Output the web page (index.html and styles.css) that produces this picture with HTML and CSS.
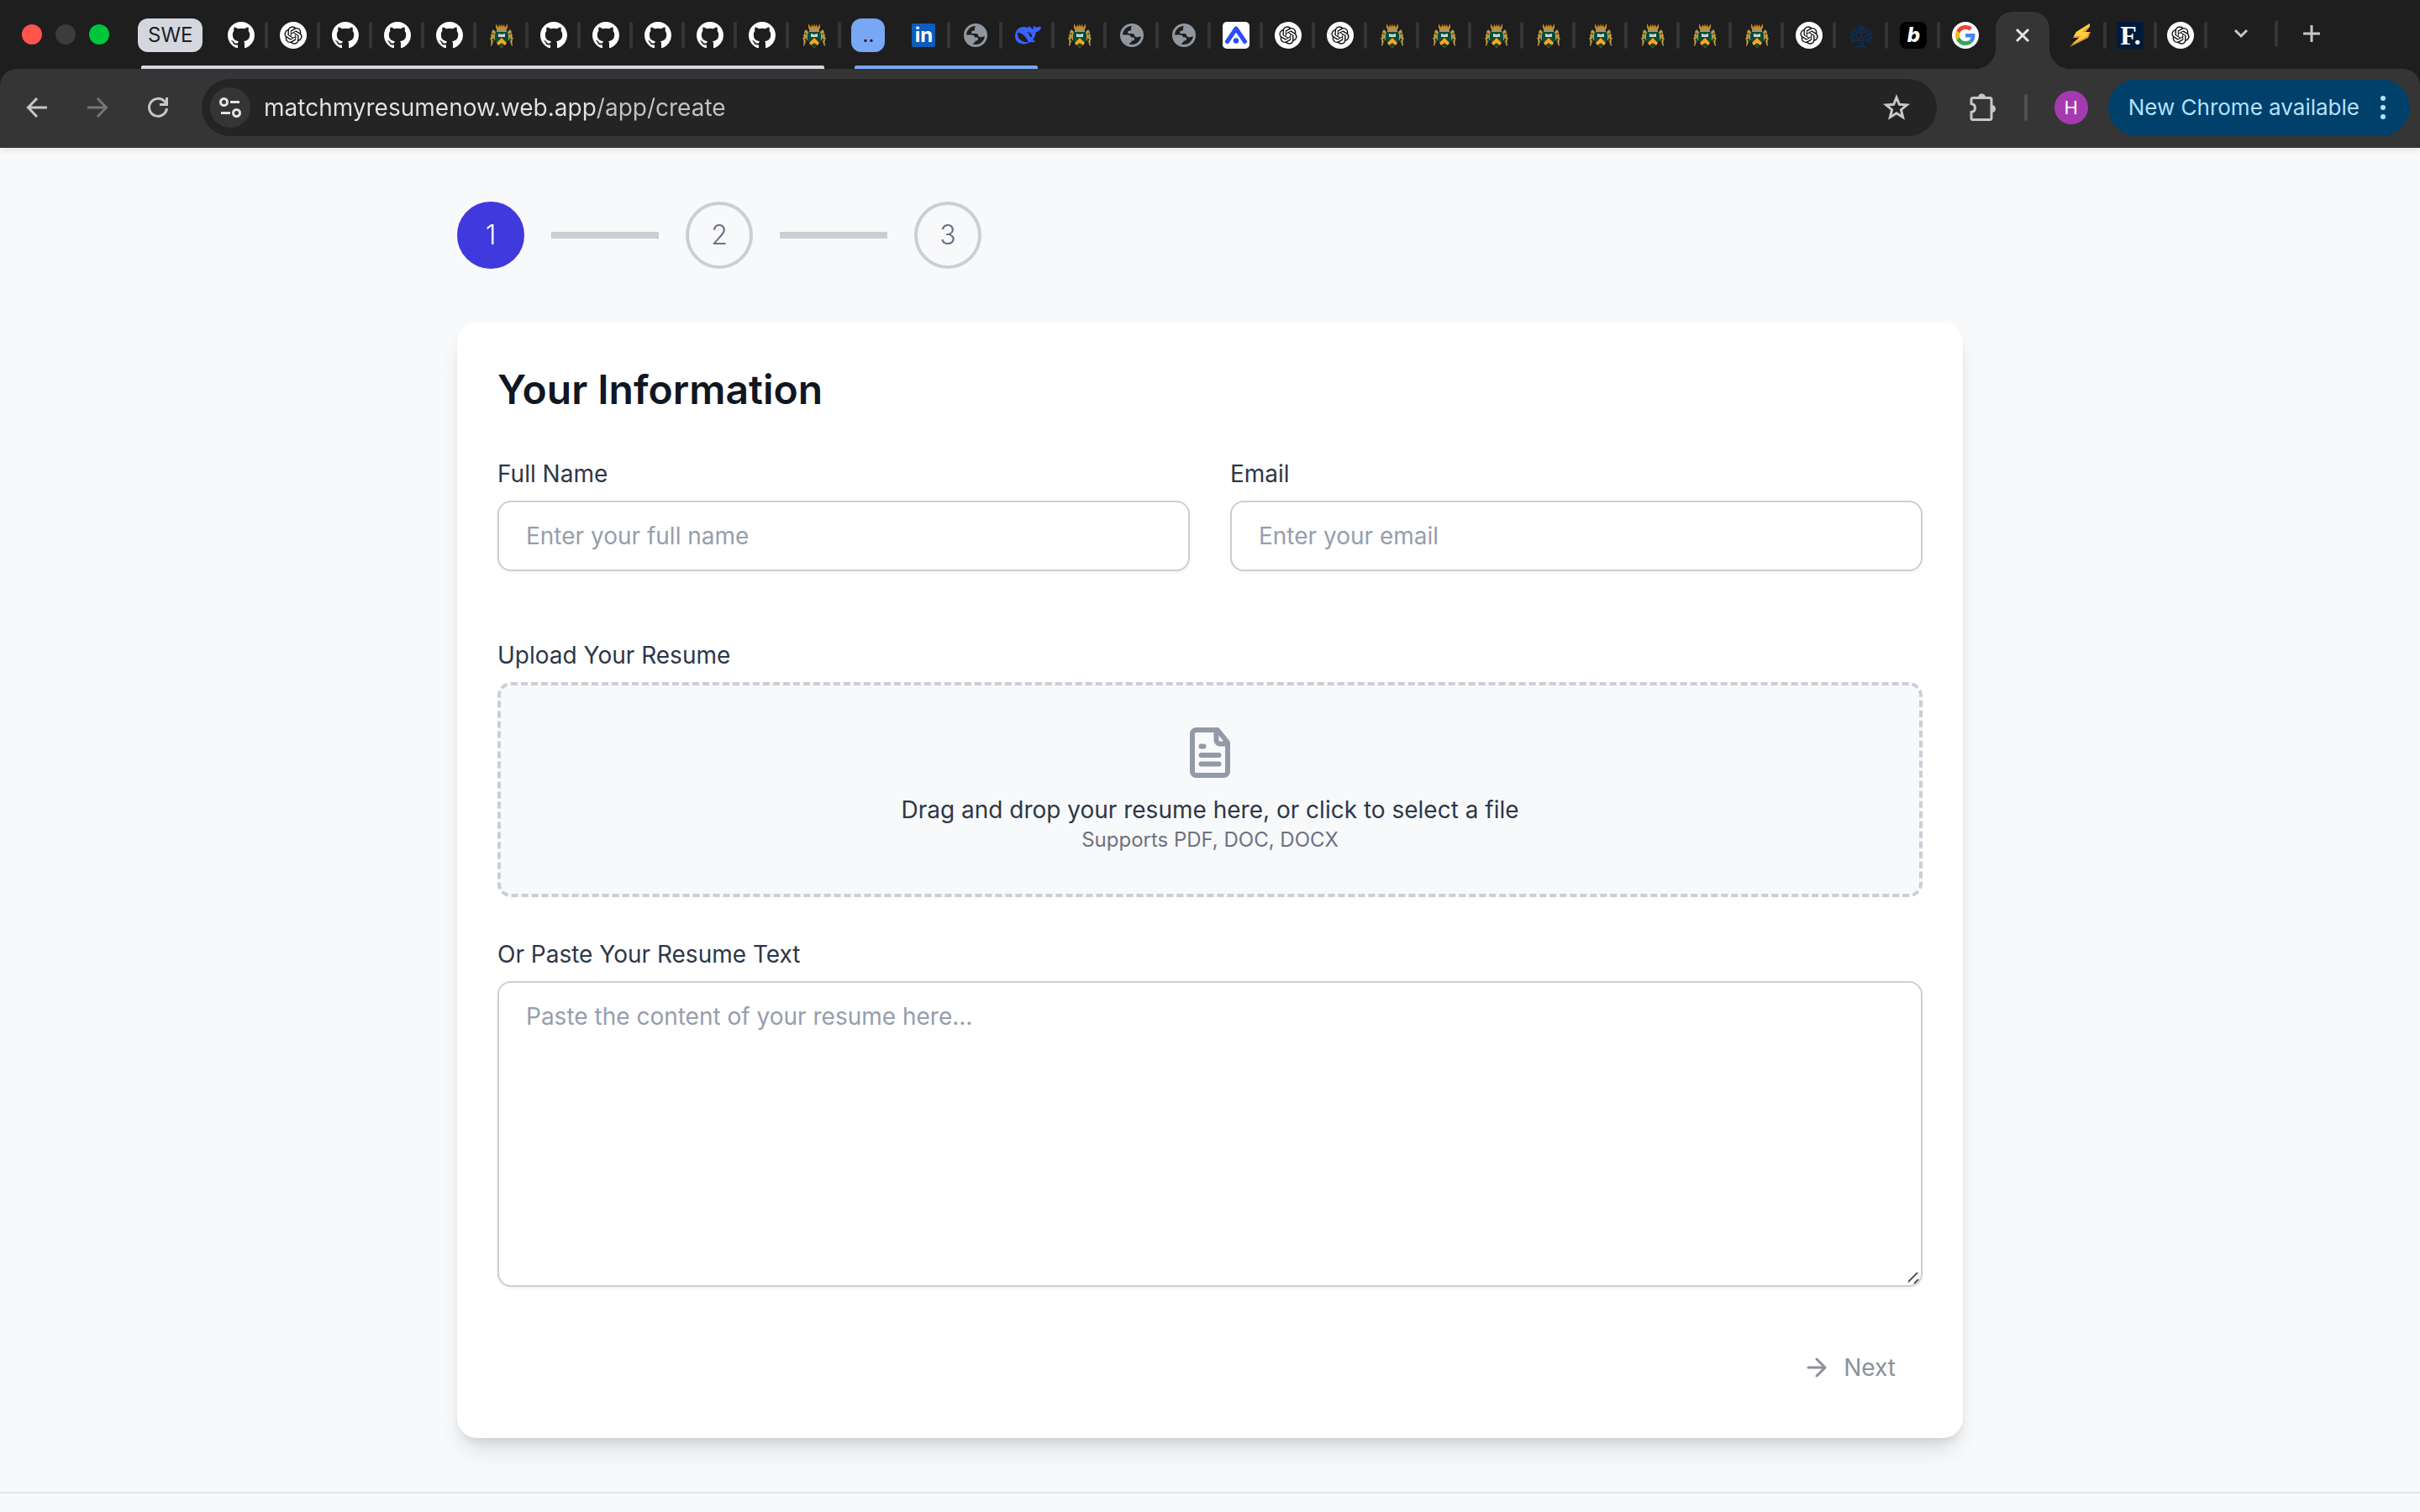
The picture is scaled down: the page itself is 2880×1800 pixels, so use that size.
FILE: index.html
```
<!DOCTYPE html>
<html lang="en">
<head>
  <meta charset="UTF-8">
  <meta name="viewport" content="width=device-width, initial-scale=1.0">
  <title>Match My Resume Now</title>
  <link rel="stylesheet" href="styles.css">
</head>
<body>
  <!-- Icon sprite -->
  <svg class="sprite" aria-hidden="true">
    <symbol id="github" viewBox="0 0 16 16">
      <path fill="#fff" d="M8 0C3.58 0 0 3.58 0 8c0 3.54 2.29 6.53 5.47 7.59.4.07.55-.17.55-.38 0-.19-.01-.82-.01-1.49-2.01.37-2.53-.49-2.69-.94-.09-.23-.48-.94-.82-1.13-.28-.15-.68-.52-.01-.53.63-.01 1.08.58 1.23.82.72 1.21 1.87.87 2.33.66.07-.52.28-.87.51-1.07-1.78-.2-3.64-.89-3.64-3.95 0-.87.31-1.59.82-2.15-.08-.2-.36-1.02.08-2.12 0 0 .67-.21 2.2.82.64-.18 1.32-.27 2-.27s1.36.09 2 .27c1.53-1.04 2.2-.82 2.2-.82.44 1.1.16 1.92.08 2.12.51.56.82 1.27.82 2.15 0 3.07-1.87 3.75-3.65 3.95.29.25.54.73.54 1.48 0 1.07-.01 1.93-.01 2.2 0 .21.15.46.55.38A8.01 8.01 0 0 0 16 8c0-4.42-3.58-8-8-8z"/>
    </symbol>
    <symbol id="openai" viewBox="0 0 36 36">
      <circle cx="18" cy="18" r="18" fill="#fff"/>
      <path transform="translate(6 6)" fill="#111" d="M22.2819 9.8211a5.9847 5.9847 0 0 0-.5157-4.9108 6.0462 6.0462 0 0 0-6.5098-2.9A6.0651 6.0651 0 0 0 4.9807 4.1818a5.9847 5.9847 0 0 0-3.9977 2.9 6.0462 6.0462 0 0 0 .7427 7.0966 5.98 5.98 0 0 0 .511 4.9107 6.051 6.051 0 0 0 6.5146 2.9001A5.9847 5.9847 0 0 0 13.2599 24a6.0557 6.0557 0 0 0 5.7718-4.2058 5.9894 5.9894 0 0 0 3.9977-2.9001 6.0557 6.0557 0 0 0-.7475-7.0729zm-9.022 12.6081a4.4755 4.4755 0 0 1-2.8764-1.0408l.1419-.0804 4.7783-2.7582a.7948.7948 0 0 0 .3927-.6813v-6.7369l2.02 1.1686a.071.071 0 0 1 .038.052v5.5826a4.504 4.504 0 0 1-4.4945 4.4944zm-9.6607-4.1254a4.4708 4.4708 0 0 1-.5346-3.0137l.142.0852 4.783 2.7582a.7712.7712 0 0 0 .7806 0l5.8428-3.3685v2.3324a.0804.0804 0 0 1-.0332.0615L9.74 19.9502a4.4992 4.4992 0 0 1-6.1408-1.6464zM2.3408 7.8956a4.485 4.485 0 0 1 2.3655-1.9728V11.6a.7664.7664 0 0 0 .3879.6765l5.8144 3.3543-2.0201 1.1685a.0757.0757 0 0 1-.071 0l-4.8303-2.7865A4.504 4.504 0 0 1 2.3408 7.872zm16.5963 3.8558L13.1038 8.364 15.1192 7.2a.0757.0757 0 0 1 .071 0l4.8303 2.7913a4.4944 4.4944 0 0 1-.6765 8.1042v-5.6772a.79.79 0 0 0-.407-.667zm2.0107-3.0231l-.142-.0852-4.7735-2.7818a.7759.7759 0 0 0-.7854 0L9.409 9.2297V6.8974a.0662.0662 0 0 1 .0284-.0615l4.8303-2.7866a4.4992 4.4992 0 0 1 6.6802 4.66zM8.3065 12.863l-2.02-1.1638a.0804.0804 0 0 1-.038-.0567V6.0742a4.4992 4.4992 0 0 1 7.3757-3.4537l-.142.0805L8.704 5.459a.7948.7948 0 0 0-.3927.6813zm1.0976-2.3654l2.602-1.4998 2.6069 1.4998v2.9994l-2.5974 1.4997-2.6067-1.4997Z"/>
    </symbol>
    <symbol id="crest" viewBox="0 0 32 32">
      <path fill="#c98a26" d="M9 2l3 5 1-4 2 3 1-4 1 4 2-3 1 4 3-5v5l-2 4H11L9 7z"/>
      <path fill="#8f9a8b" d="M10 10h12v2H10z"/>
      <path fill="#c0994a" d="M6 9l4 4-1 8-3 2-2 6-1-1 1-6-2-2 3-4-1-4z"/>
      <path fill="#c0994a" d="M26 9l-4 4 1 8 3 2 2 6 1-1-1-6 2-2-3-4 1-4z"/>
      <path fill="#0d4a37" d="M9 12h14l1 3v7l-8 8-8-8v-7zM5 13l2 1-2 4zM27 13l-2 1 2 4zM4 21l3-2v6zM28 21l-3-2v6z"/>
      <path fill="#dfa52f" d="M4 14l2 1-1 3-2-1zM28 14l-2 1 1 3 2-1zM3 22l2-1v5zM29 22l-2-1v5z"/>
      <path fill="#c9d6d8" d="M12 14l4 1 4-1v4h-8z"/>
      <path fill="#ffa41c" d="M16 19l6 6-2 3-4-3-4 3-2-3z"/>
      <path fill="#6d7f3a" d="M12 28l4 3 4-3-4 2z"/>
    </symbol>
    <symbol id="globe" viewBox="0 0 32 32">
      <circle cx="16" cy="16" r="12.5" fill="none" stroke="#91979e" stroke-width="3"/>
      <path fill="#91979e" d="M19 3c-1 1-4 2-4 5 0 1 .500 2-1 2.500-2 .500-3 0-3 2 0 1.500 1 1.500 3 1.500h3c2 0 2 3 3.500 4 2.500 1 5-1 8-1 .500-7-3-12-9.500-14z"/>
      <path fill="#91979e" d="M3 15.500h8c3 0 4 1.500 4 3h2.500c1 0 1.500.500 1.500 1.500 0 2-1 2.500-3 2.500l-1 2c-1 .500-2 .500-2 2V29C7 27 3 22 3 15.500z"/>
    </symbol>
    <symbol id="whale" viewBox="0 0 32 32">
      <path fill="#3a62ff" d="M1 17C1 10 6 5.500 12 6c2 0 3 1 4 1l2-2c1 2 3 2 4 4 1-1 1-2 .500-4 2 0 3 1 4 2 2-1 3-1.500 5.500-1-.500 4-3 5.500-6 6-.500 4-2 7-4 9 1 1 2 1 3 2.500-2 1-4.500 1-6 .500C13 28.500 1 27 1 17z"/>
      <path fill="#1e1e1e" d="M4 13c5-1 10 5 13 11-6 1-14-3-13-11z"/>
      <path fill="#1e1e1e" d="M15 12c4 0 7 3 6 6-2 1-3-3-6-6z"/>
      <circle cx="17" cy="14" r="1" fill="#3a62ff"/>
    </symbol>
    <symbol id="arch" viewBox="0 0 32 32">
      <rect width="32" height="32" rx="5" fill="#fff"/>
      <path d="M5.500 23.500L16 8l10.500 15.500" fill="none" stroke="#2b4bff" stroke-width="5" stroke-linecap="round" stroke-linejoin="round"/>
      <circle cx="16" cy="22.500" r="3.200" fill="#2b4bff"/>
    </symbol>
    <symbol id="tree" viewBox="0 0 32 32">
      <g fill="none" stroke="#0d2f5c" stroke-width="1.500">
        <path d="M13 29c2-3 2-6 1-9M19 29c-2-3-2-6-1-9M9 29.500h14M16 20V3M14 20c-4-1-5-5-3-8M18 20c4-1 5-5 3-8M13 22c-5 0-8-1-9-5M19 22c5 0 8-1 9-5"/>
        <path d="M11 12l-2-6M21 12l2-6M13 13V4M19 13V4M7 18l-1-8 3 3M25 18l1-8-3 3M3 13l3 3M29 13l-3 3M2 19l4 1-1 4 4-1M30 19l-4 1 1 4-4-1M11 17l-3-2M21 17l3-2M16 9l-2-2M16 9l2-2M16 14l-3-2M16 14l3-2"/>
      </g>
    </symbol>
    <symbol id="google" viewBox="0 0 64 64">
      <circle cx="32" cy="32" r="32" fill="#fff"/>
      <g transform="translate(8 8)">
        <path fill="#EA4335" d="M24 9.500c3.540 0 6.710 1.220 9.210 3.600l6.850-6.850C35.900 2.380 30.470 0 24 0 14.620 0 6.510 5.380 2.560 13.220l7.980 6.190C12.430 13.720 17.740 9.500 24 9.500z"/>
        <path fill="#4285F4" d="M46.980 24.550c0-1.570-.15-3.090-.38-4.550H24v9.020h12.940c-.58 2.960-2.260 5.480-4.780 7.180l7.730 6c4.510-4.180 7.090-10.360 7.090-17.650z"/>
        <path fill="#FBBC05" d="M10.530 28.590c-.48-1.450-.76-2.990-.76-4.590s.27-3.140.76-4.590l-7.980-6.190C.92 16.460 0 20.120 0 24c0 3.880.92 7.540 2.560 10.780l7.970-6.190z"/>
        <path fill="#34A853" d="M24 48c6.480 0 11.930-2.130 15.890-5.810l-7.730-6c-2.150 1.450-4.920 2.300-8.160 2.300-6.260 0-11.570-4.220-13.470-9.910l-7.980 6.190C6.510 42.620 14.620 48 24 48z"/>
      </g>
    </symbol>
    <symbol id="bolt" viewBox="0 0 32 32">
      <path fill="#e8953a" d="M28 2L12 12l-4 7h7L4 30l22-11 3-7h-6l5-6z"/>
      <path fill="#ffce3e" d="M28 2L12 12l-3 5h9L6 27l19-10 2-5h-8l9-7z"/>
    </symbol>
  </svg>

  <header class="browser">
    <div class="tab-strip">
      <div class="lights">
        <span class="light red"></span>
        <span class="light gray"></span>
        <span class="light green"></span>
      </div>

      <div class="group">
        <div class="row">
          <button class="chip">SWE</button>
          <button class="tab" aria-label="GitHub"><svg class="fav"><use href="#github"/></svg></button>
          <button class="tab" aria-label="ChatGPT"><svg class="fav"><use href="#openai"/></svg></button>
          <button class="tab" aria-label="GitHub"><svg class="fav"><use href="#github"/></svg></button>
          <button class="tab" aria-label="GitHub"><svg class="fav"><use href="#github"/></svg></button>
          <button class="tab" aria-label="GitHub"><svg class="fav"><use href="#github"/></svg></button>
          <button class="tab" aria-label="University"><svg class="fav"><use href="#crest"/></svg></button>
          <button class="tab" aria-label="GitHub"><svg class="fav"><use href="#github"/></svg></button>
          <button class="tab" aria-label="GitHub"><svg class="fav"><use href="#github"/></svg></button>
          <button class="tab" aria-label="GitHub"><svg class="fav"><use href="#github"/></svg></button>
          <button class="tab" aria-label="GitHub"><svg class="fav"><use href="#github"/></svg></button>
          <button class="tab" aria-label="GitHub"><svg class="fav"><use href="#github"/></svg></button>
          <button class="tab" aria-label="University"><svg class="fav"><use href="#crest"/></svg></button>
        </div>
        <div class="group-line"></div>
      </div>

      <div class="group blue">
        <div class="row">
          <button class="chip">..</button>
          <button class="tab" aria-label="LinkedIn"><span class="fav fav-in">in</span></button>
          <button class="tab" aria-label="Site"><svg class="fav"><use href="#globe"/></svg></button>
          <button class="tab" aria-label="DeepSeek"><svg class="fav"><use href="#whale"/></svg></button>
        </div>
        <div class="group-line"></div>
      </div>

      <div class="row">
        <button class="tab" aria-label="University"><svg class="fav"><use href="#crest"/></svg></button>
        <button class="tab" aria-label="Site"><svg class="fav"><use href="#globe"/></svg></button>
        <button class="tab" aria-label="Site"><svg class="fav"><use href="#globe"/></svg></button>
        <button class="tab" aria-label="Jobs"><svg class="fav"><use href="#arch"/></svg></button>
        <button class="tab" aria-label="ChatGPT"><svg class="fav"><use href="#openai"/></svg></button>
        <button class="tab" aria-label="ChatGPT"><svg class="fav"><use href="#openai"/></svg></button>
        <button class="tab" aria-label="University"><svg class="fav"><use href="#crest"/></svg></button>
        <button class="tab" aria-label="University"><svg class="fav"><use href="#crest"/></svg></button>
        <button class="tab" aria-label="University"><svg class="fav"><use href="#crest"/></svg></button>
        <button class="tab" aria-label="University"><svg class="fav"><use href="#crest"/></svg></button>
        <button class="tab" aria-label="University"><svg class="fav"><use href="#crest"/></svg></button>
        <button class="tab" aria-label="University"><svg class="fav"><use href="#crest"/></svg></button>
        <button class="tab" aria-label="University"><svg class="fav"><use href="#crest"/></svg></button>
        <button class="tab" aria-label="University"><svg class="fav"><use href="#crest"/></svg></button>
        <button class="tab" aria-label="ChatGPT"><svg class="fav"><use href="#openai"/></svg></button>
        <button class="tab" aria-label="Tree"><svg class="fav"><use href="#tree"/></svg></button>
        <button class="tab" aria-label="Blog"><span class="fav fav-b">b</span></button>
        <button class="tab no-sep" aria-label="Google"><svg class="fav"><use href="#google"/></svg></button>
      </div>

      <div class="active-tab">
        <button class="close" aria-label="Close tab">
          <svg width="32" height="32" viewBox="0 0 32 32"><path d="M9 9l14 14M23 9L9 23" stroke="#e3e3e3" stroke-width="3"/></svg>
        </button>
      </div>

      <div class="row tight">
        <button class="tab" aria-label="Bolt"><svg class="fav"><use href="#bolt"/></svg></button>
        <button class="tab" aria-label="F"><span class="fav fav-f">F.</span></button>
        <button class="tab" aria-label="ChatGPT"><svg class="fav"><use href="#openai"/></svg></button>
      </div>

      <div class="strip-end">
        <button class="icon-btn" aria-label="Search tabs">
          <svg width="32" height="32" viewBox="0 0 32 32"><path d="M9 12l7 7 7-7" fill="none" stroke="#c7c7c7" stroke-width="3"/></svg>
        </button>
        <span class="sep"></span>
        <button class="icon-btn" aria-label="New tab">
          <svg width="32" height="32" viewBox="0 0 32 32"><path d="M16 6v20M6 16h20" stroke="#c7c7c7" stroke-width="3"/></svg>
        </button>
      </div>
    </div>

    <div class="toolbar">
      <div class="nav">
        <button class="icon-btn" aria-label="Back">
          <svg width="32" height="32" viewBox="0 0 32 32"><path d="M28 16H6M16 5L5.500 16 16 27" fill="none" stroke="#c7c7c7" stroke-width="3"/></svg>
        </button>
        <button class="icon-btn" aria-label="Forward">
          <svg width="32" height="32" viewBox="0 0 32 32"><path d="M4 16h22M16 5l10.500 11L16 27" fill="none" stroke="#757575" stroke-width="3"/></svg>
        </button>
        <button class="icon-btn" aria-label="Reload">
          <svg width="32" height="32" viewBox="0 0 32 32"><path d="M26.500 17A10.500 10.500 0 1 1 24 9l2.500 3M26.500 4v8.500H18" fill="none" stroke="#c7c7c7" stroke-width="3"/></svg>
        </button>
      </div>

      <div class="omnibox">
        <button class="site-info" aria-label="View site information">
          <svg width="32" height="32" viewBox="0 0 32 32" fill="none" stroke="#e3e3e3" stroke-width="3"><circle cx="8.500" cy="9.500" r="4"/><path d="M16 9.500h11M5 22.500h11"/><circle cx="23.500" cy="22.500" r="4"/></svg>
        </button>
        <input class="url" type="text" aria-label="Address" value="matchmyresumenow.web.app/app/create">
        <button class="icon-btn" aria-label="Bookmark">
          <svg width="36" height="36" viewBox="0 0 36 36"><path d="M18 6l3.300 8.300 9 .700-6.900 5.700 2.200 8.800L18 24.700l-7.600 4.800 2.200-8.800L5.700 15l9-.700z" fill="none" stroke="#c7c7c7" stroke-width="3"/></svg>
        </button>
      </div>

      <button class="icon-btn" aria-label="Extensions">
        <svg width="36" height="36" viewBox="0 0 36 36"><path d="M5 8.500q0-2 2-2h20q2 0 2 2v22q0 2-2 2H7q-2 0-2-2v-7c6-1 6-9 0-10z" fill="none" stroke="#c7c7c7" stroke-width="3"/><path d="M13 6a4.500 4.500 0 0 1 9 0zM29.500 15a4.500 4.500 0 0 1 0 9z" fill="#c7c7c7"/></svg>
      </button>
      <span class="sep"></span>
      <button class="avatar">H</button>
      <button class="update">
        New Chrome available
        <svg width="8" height="32" viewBox="0 0 8 32" fill="#b3e0ff"><circle cx="4" cy="5" r="3"/><circle cx="4" cy="16" r="3"/><circle cx="4" cy="27" r="3"/></svg>
      </button>
    </div>
  </header>

  <main class="content">
    <ol class="steps">
      <li class="step active">1</li>
      <li class="step-line" aria-hidden="true"></li>
      <li class="step">2</li>
      <li class="step-line" aria-hidden="true"></li>
      <li class="step">3</li>
    </ol>

    <form class="card">
      <h2>Your Information</h2>

      <div class="form-grid">
        <div class="field">
          <label for="fullName">Full Name</label>
          <input type="text" id="fullName" placeholder="Enter your full name">
        </div>
        <div class="field">
          <label for="email">Email</label>
          <input type="email" id="email" placeholder="Enter your email">
        </div>
      </div>

      <div class="field">
        <label for="resumeFile">Upload Your Resume</label>
        <input class="file-input" type="file" id="resumeFile" accept=".pdf,.doc,.docx">
        <label class="dropzone" for="resumeFile">
          <svg width="72" height="72" viewBox="0 0 24 24" fill="none" stroke="#929aa8" stroke-width="2" stroke-linecap="round" stroke-linejoin="round">
            <path d="M15 3H6.500A1.500 1.500 0 0 0 5 4.500v15A1.500 1.500 0 0 0 6.500 21h11a1.500 1.500 0 0 0 1.500-1.500V8z"/>
            <path d="M14.500 3.500V7A1.500 1.500 0 0 0 16 8.500h2.500M8.500 9.500h1M8.500 13h7M8.500 16.500h7"/>
          </svg>
          <span class="drop-title">Drag and drop your resume here, or click to select a file</span>
          <span class="drop-hint">Supports PDF, DOC, DOCX</span>
        </label>
      </div>

      <div class="field">
        <label for="resumeText">Or Paste Your Resume Text</label>
        <textarea id="resumeText" placeholder="Paste the content of your resume here..."></textarea>
      </div>

      <div class="actions">
        <button type="button" class="next-btn" disabled>
          <svg width="32" height="32" viewBox="0 0 32 32" fill="none" stroke="currentColor" stroke-width="3" stroke-linecap="round" stroke-linejoin="round"><path d="M6 16h20M16 6l10 10-10 10"/></svg>
          Next
        </button>
      </div>
    </form>
  </main>

  <footer class="footer"></footer>
</body>
</html>
```
FILE: styles.css
```
* {
  box-sizing: border-box;
}
body {
  margin: 0;
  min-height: 100vh;
  display: flex;
  flex-direction: column;
  background: #f8f9fb;
  color: #2d3748;
  font-family: Inter, "Open Sans", sans-serif;
  font-size: 28px;
  line-height: 40px;
}
button {
  padding: 0;
  border: none;
  background: none;
  font: inherit;
  color: inherit;
}
svg {
  display: block;
}
.sprite {
  position: absolute;
  width: 0;
  height: 0;
}

/* Browser */
.browser {
  background: #1e1e1e;
  box-shadow: 0 2px 8px rgba(0, 0, 0, 0.1);
}
.tab-strip {
  display: flex;
  height: 82px;
}
.lights {
  display: flex;
  align-items: center;
  gap: 16px;
  padding: 0 34px 0 26px;
}
.light {
  width: 24px;
  height: 24px;
  border-radius: 50%;
}
.red {
  background: #ff544d;
}
.gray {
  background: #3c3c3c;
}
.green {
  background: #00c53a;
}
.row {
  display: flex;
  align-items: center;
  height: 78px;
  padding-top: 6px;
}
.group {
  margin-right: 12px;
}
.group-line {
  height: 4px;
  margin: 0 20px 0 4px;
  border-radius: 2px 2px 0 0;
  background: #d4d9de;
}
.chip {
  height: 40px;
  min-width: 40px;
  margin-right: 16px;
  padding: 0 12px;
  border-radius: 12px;
  background: #d4d8de;
  color: #1e1e1e;
  font-size: 24px;
}
.blue {
  margin-right: 0;
}
.blue .group-line {
  background: #78a8f5;
}
.blue .chip {
  padding: 0;
  background: #78a8f5;
}
.tab {
  display: flex;
  align-items: center;
  gap: 12px;
  padding-left: 14px;
}
.tab::after {
  content: "";
  width: 4px;
  height: 32px;
  border-radius: 2px;
  background: #353535;
}
.no-sep::after {
  background: none;
}
.tight .tab {
  padding-left: 12px;
}
.fav {
  width: 32px;
  height: 32px;
  line-height: 32px;
  text-align: center;
}
.fav-in {
  width: 28px;
  height: 28px;
  margin: 0 2px;
  border-radius: 2px;
  background: #0a5dbd;
  color: #fff;
  font-size: 24px;
  font-weight: 700;
  line-height: 28px;
}
.fav-b {
  border-radius: 8px;
  background: #000;
  color: #fff;
  font-size: 24px;
  font-style: italic;
  font-weight: 800;
}
.fav-f {
  background: #001b3a;
  color: #fff;
  font-family: "Liberation Serif", serif;
  font-size: 32px;
  font-weight: 700;
}
.active-tab {
  position: relative;
  display: flex;
  align-items: center;
  justify-content: center;
  width: 64px;
  margin: 14px 8px 0 4px;
  padding-bottom: 12px;
  border-radius: 20px 20px 0 0;
  background: #353535;
}
.active-tab::before,
.active-tab::after {
  content: "";
  position: absolute;
  bottom: 0;
  width: 24px;
  height: 24px;
}
.active-tab::before {
  right: 100%;
  background: radial-gradient(circle at 0 0, transparent 24px, #353535 24px);
}
.active-tab::after {
  left: 100%;
  background: radial-gradient(circle at 100% 0, transparent 24px, #353535 24px);
}
.strip-end {
  display: flex;
  align-items: center;
  gap: 20px;
  height: 80px;
  padding-left: 20px;
}
.icon-btn {
  display: flex;
  align-items: center;
  justify-content: center;
  width: 40px;
  height: 40px;
}
.sep {
  width: 4px;
  height: 32px;
  border-radius: 2px;
  background: #4f4f4f;
}
.strip-end .sep {
  background: #353535;
}
.toolbar {
  display: flex;
  align-items: center;
  height: 94px;
  padding: 0 12px 2px 24px;
  border-radius: 20px 20px 0 0;
  background: #353535;
}
.nav {
  display: flex;
  gap: 32px;
  margin-right: 32px;
}
.omnibox {
  display: flex;
  flex: 1;
  align-items: center;
  height: 68px;
  margin-right: 34px;
  padding: 0 28px 0 10px;
  border-radius: 34px;
  background: #242424;
}
.site-info {
  display: flex;
  align-items: center;
  justify-content: center;
  width: 48px;
  height: 48px;
  border-radius: 50%;
  background: #353535;
}
.url {
  flex: 1;
  margin-left: 16px;
  padding: 0;
  border: none;
  outline: none;
  background: linear-gradient(90deg, #e3e3e3 394px, #c4c4c4 394px);
  background-clip: text;
  color: transparent;
  font: inherit;
}
.toolbar > .sep {
  margin: 0 32px 0 30px;
}
.avatar {
  width: 40px;
  height: 40px;
  margin-right: 24px;
  border-radius: 50%;
  background: #a53ab0;
  color: #fff;
  font-size: 22px;
}
.update {
  display: flex;
  align-items: center;
  gap: 24px;
  height: 68px;
  padding: 0 28px 0 24px;
  border-radius: 34px;
  background: #00406a;
  color: #b3e0ff;
  font-size: 26px;
}

/* Page */
.content {
  width: 100%;
  max-width: 1920px;
  margin: 0 auto;
  padding: 64px;
}
.steps {
  display: flex;
  align-items: center;
  gap: 32px;
  margin: 0 0 64px;
  padding: 0;
  list-style: none;
}
.step {
  display: flex;
  align-items: center;
  justify-content: center;
  width: 80px;
  height: 80px;
  border: 4px solid #cacfd6;
  border-radius: 50%;
  color: #6b7280;
  font-size: 32px;
  font-weight: 300;
}
.step.active {
  border-color: #4039dd;
  background: #4039dd;
  color: #fff;
}
.step-line {
  width: 128px;
  height: 8px;
  background: #cacfd6;
}
.card {
  padding: 48px;
  border-radius: 24px;
  background: #fff;
  box-shadow: 0 20px 30px -6px rgba(0, 0, 0, 0.1), 0 8px 12px -4px rgba(0, 0, 0, 0.1);
}
h2 {
  margin: 0 0 48px;
  color: #111722;
  font-size: 48px;
  font-weight: 600;
  line-height: 64px;
}
.form-grid {
  display: grid;
  grid-template-columns: 1fr 1fr;
  gap: 48px;
  margin-bottom: 80px;
}
.field + .field {
  margin-top: 48px;
}
.form-grid .field + .field {
  margin-top: 0;
}
.field label {
  display: block;
  margin-bottom: 12px;
}
.field input,
.field textarea {
  display: block;
  width: 100%;
  padding: 20px 32px;
  border: 2px solid #cacfd6;
  border-radius: 16px;
  background: #fff;
  box-shadow: 0 2px 4px rgba(0, 0, 0, 0.05);
  color: inherit;
  font: inherit;
}
.field input {
  height: 84px;
}
.field textarea {
  height: 364px;
  resize: vertical;
}
.field textarea::-webkit-scrollbar {
  width: 20px;
}
.field textarea::-webkit-resizer {
  background: url("data:image/svg+xml,%3Csvg xmlns='http://www.w3.org/2000/svg' width='20' height='20'%3E%3Cpath d='M3 18L17 4M12 18l5-5' stroke='%23555' stroke-width='2'/%3E%3C/svg%3E") no-repeat right bottom;
}
.field ::placeholder {
  color: #969ead;
}
.field .file-input {
  position: absolute;
  width: 1px;
  height: 1px;
  padding: 0;
  opacity: 0;
}
.field .dropzone {
  display: flex;
  flex-direction: column;
  align-items: center;
  height: 256px;
  margin: 0;
  padding: 44px;
  border: 4px dashed #cacfd6;
  border-radius: 16px;
  background: #f8f9fb;
}
.drop-title {
  margin-top: 12px;
}
.drop-hint {
  color: #6b7280;
  font-size: 24px;
  line-height: 32px;
}
.actions {
  display: flex;
  justify-content: flex-end;
  margin-top: 60px;
}
.next-btn {
  display: flex;
  align-items: center;
  gap: 16px;
  padding: 16px 32px;
  color: #8d9099;
}
.footer {
  flex: 1;
  border-top: 2px solid #e2e5ec;
}
```
